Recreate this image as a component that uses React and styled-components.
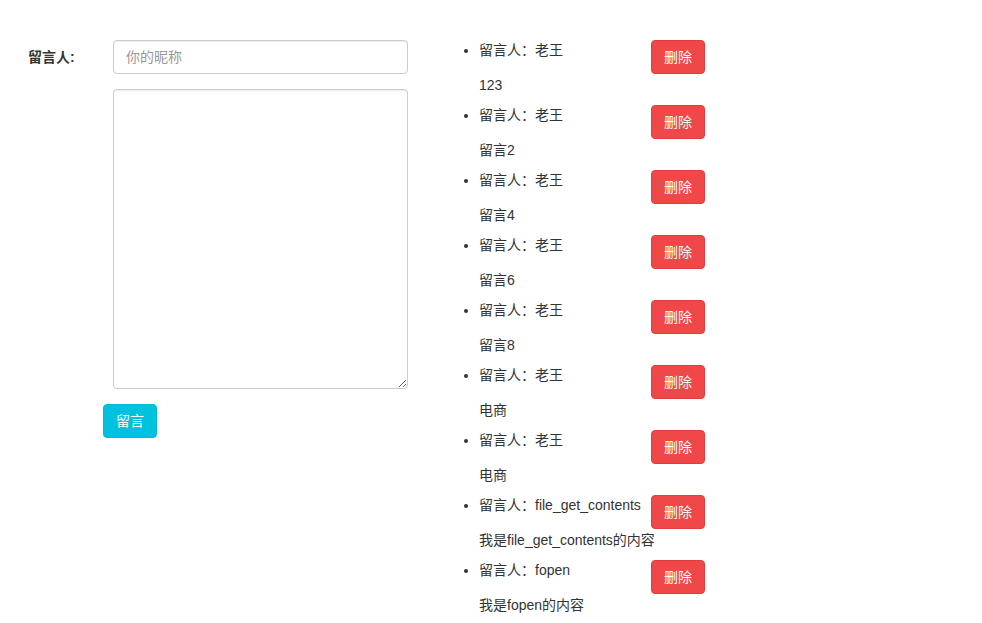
import React from "react";
import styled, { createGlobalStyle } from "styled-components";

const Global = createGlobalStyle`
  html, body { margin: 0; padding: 0; background: #fff; }
  body {
    font-family: "Liberation Sans", "Noto Sans CJK SC", Arial, sans-serif;
    font-size: 14px;
    color: #333;
  }
  * { box-sizing: border-box; }
`;

const Page = styled.div`
  display: flex;
  align-items: flex-start;
  padding: 40px 0 0 28px;
`;

const Form = styled.form`
  display: grid;
  grid-template-columns: 85px 295px;
  row-gap: 15px;
  width: 380px;
`;

const Label = styled.label`
  font-weight: bold;
  line-height: 34px;
  font-size: 14px;
`;

const Input = styled.input`
  height: 34px;
  width: 100%;
  border: 1px solid #ccc;
  border-radius: 4px;
  padding: 6px 12px;
  font: inherit;
  color: #555;
  box-shadow: inset 0 1px 1px rgba(0, 0, 0, 0.075);
  outline: none;
  &::placeholder { color: #999; }
`;

const TextArea = styled.textarea`
  grid-column: 2;
  height: 300px;
  width: 100%;
  border: 1px solid #ccc;
  border-radius: 4px;
  padding: 6px 12px;
  font: inherit;
  box-shadow: inset 0 1px 1px rgba(0, 0, 0, 0.075);
  outline: none;
  resize: both;
`;

const ButtonCell = styled.div`
  grid-column: 2;
  margin-left: -10px;
`;

const Btn = styled.button`
  width: 54px;
  height: 34px;
  border-radius: 4px;
  border: 1px solid ${(p) => (p.$danger ? "#e63b3b" : "#00bcd8")};
  background: ${(p) => (p.$danger ? "#f04848" : "#00c1de")};
  color: #fff;
  font-family: "Liberation Sans", "Noto Sans CJK SC", sans-serif;
  font-size: 14px;
  padding: 0 0 2px;
  cursor: pointer;
  flex-shrink: 0;
`;

const List = styled.ul`
  margin: 0 0 0 32px;
  padding: 0 0 0 39px;
  list-style: disc;
`;

const Item = styled.li`
  padding-bottom: 10px;
  &::marker { color: #333; }
`;

const Row = styled.div`
  display: flex;
  align-items: flex-start;
`;

const Text = styled.div`
  width: 172px;
  line-height: 20px;
`;

const Content = styled.div`
  margin-top: 15px;
  white-space: nowrap;
`;

const messages = [
  { name: "老王", content: "123" },
  { name: "老王", content: "留言2" },
  { name: "老王", content: "留言4" },
  { name: "老王", content: "留言6" },
  { name: "老王", content: "留言8" },
  { name: "老王", content: "电商" },
  { name: "老王", content: "电商" },
  { name: "file_get_contents", content: "我是file_get_contents的内容" },
  { name: "fopen", content: "我是fopen的内容" },
];

export default function App() {
  return (
    <>
      <Global />
      <Page>
        <Form onSubmit={(e) => e.preventDefault()}>
          <Label>留言人:</Label>
          <Input placeholder="你的昵称" />
          <TextArea />
          <ButtonCell>
            <Btn type="submit">留言</Btn>
          </ButtonCell>
        </Form>
        <List>
          {messages.map((m, i) => (
            <Item key={i}>
              <Row>
                <Text>
                  <div>留言人：{m.name}</div>
                  <Content>{m.content}</Content>
                </Text>
                <Btn $danger>删除</Btn>
              </Row>
            </Item>
          ))}
        </List>
      </Page>
    </>
  );
}
